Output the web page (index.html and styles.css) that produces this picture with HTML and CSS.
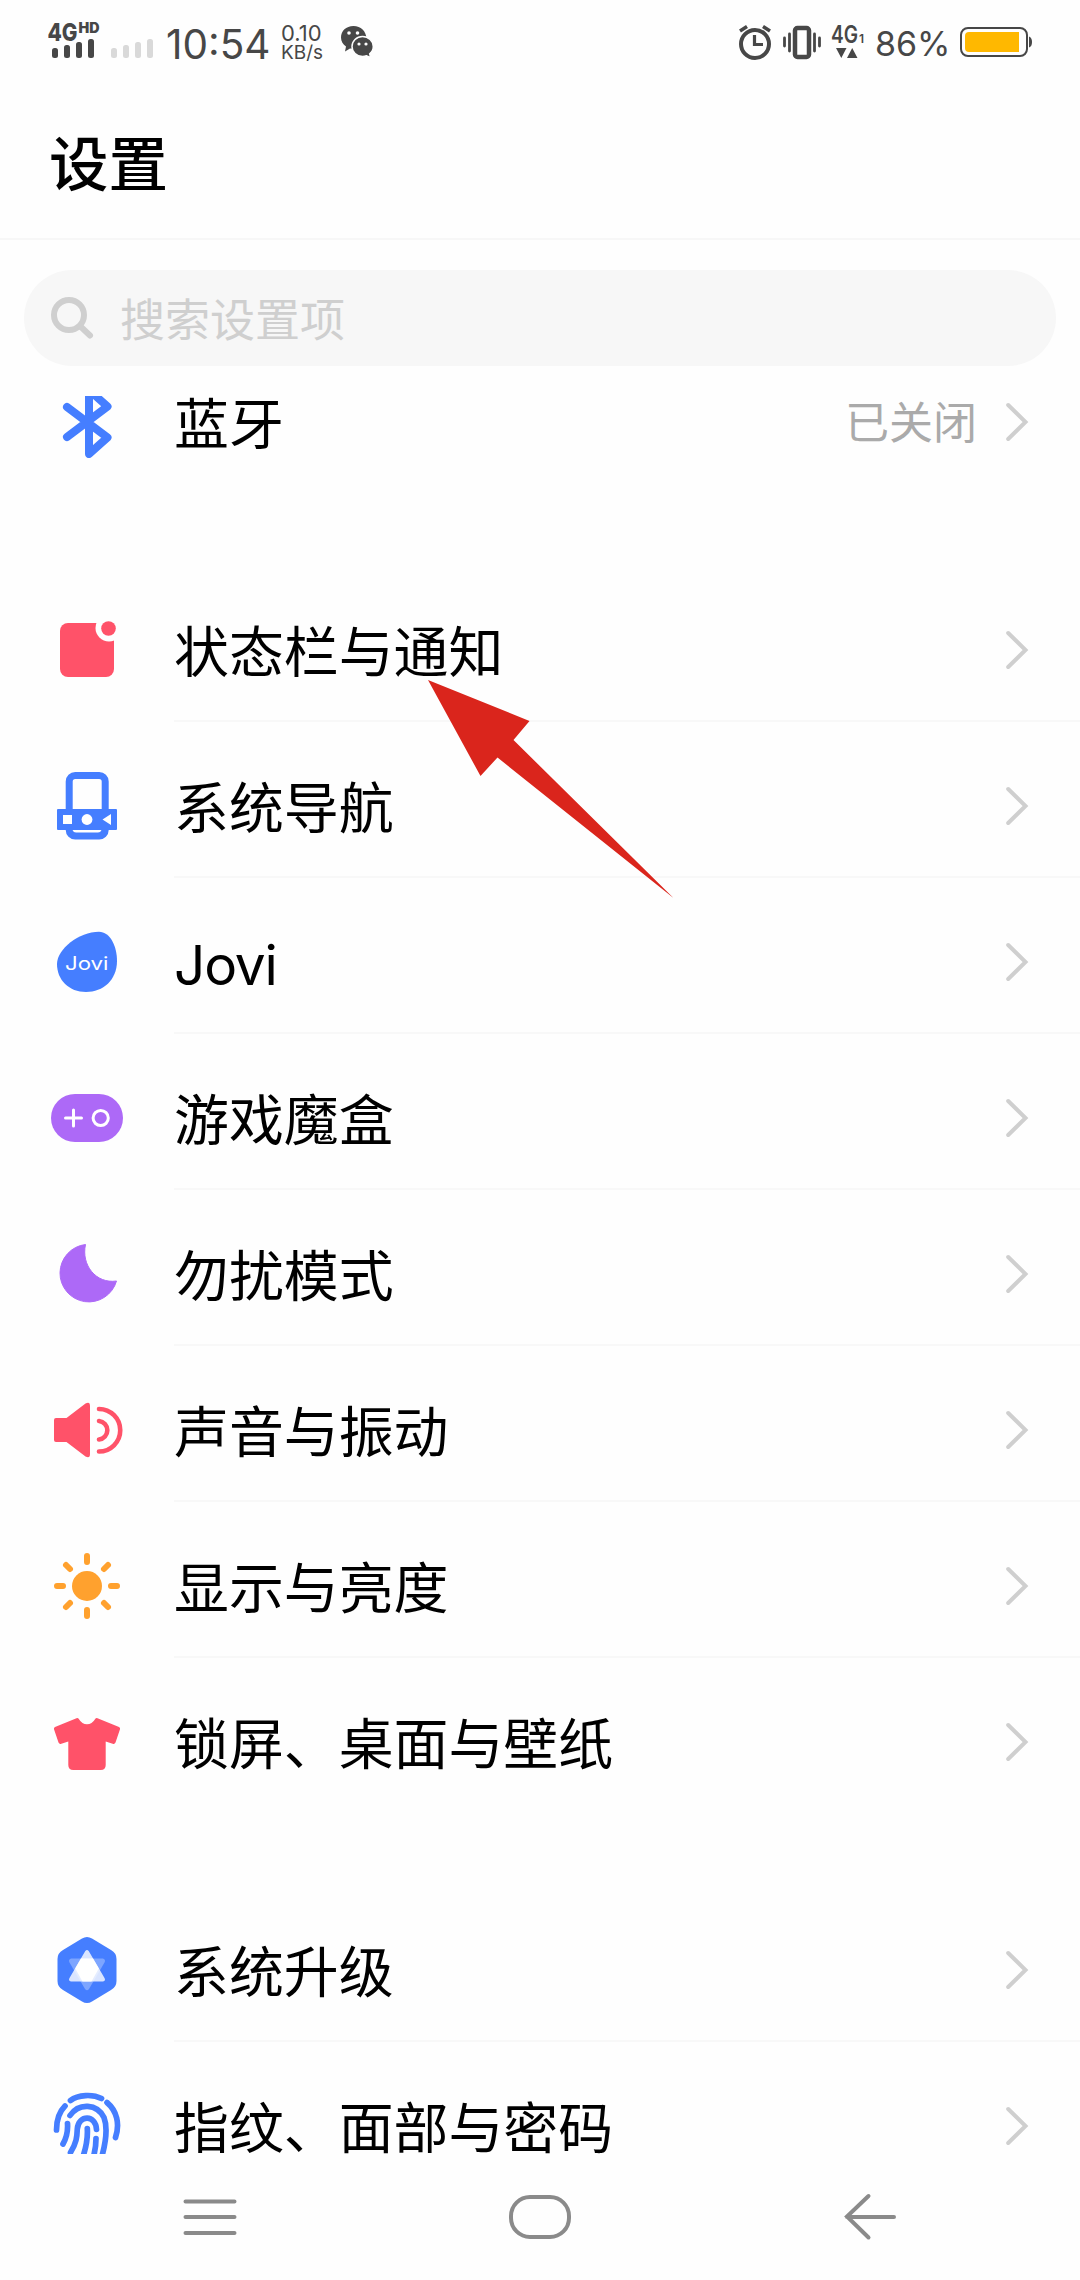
FILE: index.html
```html
<!DOCTYPE html>
<html lang="zh-CN">
<head>
<meta charset="utf-8">
<title>设置</title>
<link rel="stylesheet" href="styles.css">
</head>
<body>
<svg class="defs" width="0" height="0" aria-hidden="true">
  <symbol id="chevron" viewBox="0 0 24 40"><path d="M2.2 3 19.5 20 2.2 37" fill="none" stroke="#cfcfcf" stroke-width="4" stroke-linecap="round"/></symbol>
</svg>
<div class="screen">
  <div class="status">
    <svg class="signal" viewBox="48 0 110 80" fill="#474747">
      <text x="47.500" y="41" font-size="25" font-weight="800" textLength="30" lengthAdjust="spacingAndGlyphs">4G</text>
      <text x="78.500" y="33" font-size="14" font-weight="900" textLength="21" lengthAdjust="spacingAndGlyphs">HD</text>
      <g><rect x="52" y="48" width="6" height="10" rx="2.500"/><rect x="64" y="45" width="6" height="13" rx="2.500"/><rect x="76" y="42" width="6" height="16" rx="2.500"/><rect x="88" y="39" width="6" height="19" rx="2.500"/></g>
      <g fill="#d9d9d9"><rect x="111" y="48" width="6" height="10" rx="2.500"/><rect x="123" y="45" width="6" height="13" rx="2.500"/><rect x="135" y="42" width="6" height="16" rx="2.500"/><rect x="147" y="39" width="6" height="19" rx="2.500"/></g>
    </svg>
    <span class="time">10:54</span>
    <span class="speed"><span class="rate">0.10</span><span>KB/s</span></span>
    <svg class="wechat" viewBox="340 0 34 80">
      <path d="M353.500 26C346 26 341 31 341 37.500c0 4 2 7 5 9l-1 5 5-3c10 2 16-3 16.500-10C366 31 361 26 353.500 26z" fill="#474747"/>
      <path d="M362.500 36.500c-6 0-10.500 4.500-10.500 10s4.500 10 10.500 10c1.500 0 3-.3 4-.7l4.200 2-1-4c2.300-1.800 3.600-4.500 3.600-7.300 0-5.500-4.800-10-10.800-10z" fill="#474747" stroke="#fefefe" stroke-width="1.500"/>
      <g fill="#fefefe"><circle cx="349" cy="33" r="1.800"/><circle cx="357.500" cy="33" r="1.800"/><circle cx="359" cy="44" r="1.600"/><circle cx="366" cy="44" r="1.600"/></g>
    </svg>
    <svg class="modes" viewBox="738 0 128 80" fill="none" stroke="#474747">
      <circle cx="755" cy="44" r="14" stroke-width="4"/><path d="M754.500 35v9.500h8.500" stroke-width="3.200"/><path d="M740 31l7-4.500M763 26.500l7 4.500" stroke-width="3.500"/>
      <rect x="795" y="28" width="14" height="29" rx="2.500" stroke-width="4.500"/><path d="M789.500 34v17M784.500 38v8M814.500 34v17M819.500 38v8" stroke-width="2.800" stroke-linecap="round"/>
      <g fill="#474747" stroke="none"><text x="831" y="43" font-size="24" font-weight="600" textLength="27" lengthAdjust="spacingAndGlyphs">4G</text><text x="859" y="43" font-size="12" font-weight="600">1</text><path d="M836 48h10.500l-5.200 10zM847 58h10.500l-5.300-10z"/></g>
    </svg>
    <span class="percent">86%</span>
    <svg class="battery" viewBox="959 0 75 80"><rect x="961" y="28" width="66" height="28" rx="7" fill="none" stroke="#474747" stroke-width="2"/><path d="M969 32h50v20h-50q-4 0-4-4V36q0-4 4-4z" fill="#ffb800"/><path d="M1029 36.500q3 1 3 5.500t-3 5.500z" fill="#474747"/></svg>
  </div>
  <header class="header"><h1>设置</h1></header>
  <div class="search">
    <svg viewBox="0 0 46 46" fill="none" stroke="#cfcfcf" stroke-width="6" stroke-linecap="round"><circle cx="20" cy="20" r="15"/><path d="M31 31l10 9.500"/></svg>
    <span>搜索设置项</span>
  </div>
  <main class="viewport">
    <section class="group first">
      <div class="row">
        <svg class="icon" viewBox="0 0 72 72" fill="none" stroke="#457eff" stroke-width="8" stroke-linecap="round" stroke-linejoin="round"><path d="M16 21 56.500 51.500 38 68V4L56.500 20.500 16 51"/></svg>
        <span class="label">蓝牙</span><span class="value">已关闭</span><svg class="chev"><use href="#chevron"/></svg>
      </div>
    </section>
    <section class="group">
      <div class="row">
        <svg class="icon" viewBox="0 0 72 72" fill="#ff5269"><rect x="9" y="9" width="54" height="54" rx="8"/><circle cx="58" cy="14" r="13.500" fill="#fefefe"/><circle cx="57.500" cy="14.500" r="7.300"/></svg>
        <span class="label">状态栏与通知</span><svg class="chev"><use href="#chevron"/></svg>
      </div>
      <div class="row">
        <svg class="icon" viewBox="0 0 72 72"><rect x="18.200" y="5.500" width="36" height="60.500" rx="6" fill="none" stroke="#457eff" stroke-width="7"/><path d="M21 59h30v7H21z" fill="#457eff"/><rect x="6" y="39" width="60" height="21" rx="1" fill="#457eff"/><path d="M12 45h9v9h-9zM60 44v11l-8.500-5.500zM21.500 60h29q-1 2.500-3.500 2.500H25q-2.500 0-3.500-2.500z" fill="#fff"/><circle cx="36" cy="49.500" r="5.400" fill="#fff"/></svg>
        <span class="label">系统导航</span><svg class="chev"><use href="#chevron"/></svg>
      </div>
      <div class="row">
        <svg class="icon" viewBox="0 0 72 72"><path d="M48 5.700C59 5.700 66 20 66 35 66 54 52 66 35 66 18 66 6 54 6 38 6 23 28 5.700 48 5.700z" fill="#457eff"/><text x="14" y="43.500" font-size="18" font-weight="400" fill="#fff" textLength="43.500" lengthAdjust="spacingAndGlyphs">Jovi</text></svg>
        <span class="label latin">Jovi</span><svg class="chev"><use href="#chevron"/></svg>
      </div>
      <div class="row">
        <svg class="icon" viewBox="0 0 72 72"><rect y="12" width="72" height="48" rx="24" fill="#ad69f7"/><path d="M14.500 36h16M22.500 28v16" stroke="#fff" stroke-width="3" stroke-linecap="round"/><circle cx="49.700" cy="36" r="7.600" fill="none" stroke="#fff" stroke-width="3"/></svg>
        <span class="label">游戏魔盒</span><svg class="chev"><use href="#chevron"/></svg>
      </div>
      <div class="row">
        <svg class="icon" viewBox="0 0 72 72"><path d="M34.500 6.500A28.800 28.800 0 1 0 65.500 43C45 46 30 27 34.500 6.500z" fill="#ad69f7" stroke="#ad69f7" stroke-linejoin="round"/></svg>
        <span class="label">勿扰模式</span><svg class="chev"><use href="#chevron"/></svg>
      </div>
      <div class="row">
        <svg class="icon" viewBox="0 0 72 72"><path d="M5 24h10.500L34.500 9.500Q39 7 39 12v48q0 5-4.500 2.500L15.500 48H5q-2 0-2-2V26q0-2 2-2z" fill="#ff5269"/><path d="M48 15a21 21 0 0 1 0 42.500M48 27a9.300 9.300 0 0 1 0 18.500" fill="none" stroke="#ff5269" stroke-width="4.600" stroke-linecap="round"/></svg>
        <span class="label">声音与振动</span><svg class="chev"><use href="#chevron"/></svg>
      </div>
      <div class="row">
        <svg class="icon" viewBox="0 0 72 72"><circle cx="36" cy="36" r="15" fill="#ffa12e"/><path d="M36 12V6M36 60v6M12 36H6M60 36h6M19 19l-4-4M53 19l4-4M19 53l-4 4M53 53l4 4" stroke="#ffa12e" stroke-width="6" stroke-linecap="round"/></svg>
        <span class="label">显示与亮度</span><svg class="chev"><use href="#chevron"/></svg>
      </div>
      <div class="row">
        <svg class="icon" viewBox="0 0 72 72"><path d="M25.500 12.200q1.500-.5 2.500 1 3 5 8 5t8-5q1-1.500 2.500-1L68 21q1.500.7 1 2.300L64.500 36.500q-.8 2-2.800 1.300L54.700 35.500V59q0 5-5 5H22.300q-5 0-5-5V35.500l-7 2.300q-2 .7-2.800-1.300L3 23.300Q2.500 21.700 4 21z" fill="#ff5269"/></svg>
        <span class="label">锁屏、桌面与壁纸</span><svg class="chev"><use href="#chevron"/></svg>
      </div>
    </section>
    <section class="group">
      <div class="row">
        <svg class="icon" viewBox="0 0 72 72"><path d="M31 4.500q5-3 10 0L60 16q5.500 3 5.500 9v22q0 6-5.500 9L41 67.500q-5 3-10 0L12 56q-5.500-3-5.500-9V25q0-6 5.500-9z" fill="#457eff"/><path d="M20 24.500h32q3 1 1.500 4L38 55q-2 2.500-4 0L18.500 28.500q-1.500-3 1.500-4z" fill="#fff" opacity=".3"/><path d="M34.300 17q1.700-2 3.400 0L53.500 44q1.500 2.500-1.500 3.500H20q-3-1-1.500-3.500z" fill="#fff" opacity=".8"/><path d="M30 24.500h12L47.800 34.500 40.500 47.500h-9L24.200 34.500z" fill="#fff"/></svg>
        <span class="label">系统升级</span><svg class="chev"><use href="#chevron"/></svg>
      </div>
      <div class="row">
        <svg class="icon" viewBox="0 0 72 72" fill="none" stroke="#457eff" stroke-width="5.700" stroke-linecap="round"><path d="M19.500 10.500C27 4.500 42 4 50.500 8.500M14 16C8 22 5.500 29 5.500 40M56 12.500C66 21 69 34 64.500 47.500M19 25.500C28 12.500 46 13.500 53 27.500 57 38 54.500 53 51 66M16.500 33.500C17 41 16 47 12 54M19.500 62.500C25.500 53 26 47 26.300 39 27.500 24.500 45 24.500 45.500 39.500M36.300 38.500C37 50 35 58 31.500 68M45 48.500C45 56 44 62 42 68"/></svg>
        <span class="label">指纹、面部与密码</span><svg class="chev"><use href="#chevron"/></svg>
      </div>
    </section>
  </main>
  <nav class="nav">
    <svg viewBox="0 0 62 50"><path d="M6.500 9.500h49M6.500 25h49M6.500 41h49"/></svg>
    <svg viewBox="0 0 62 50"><rect x="2" y="5" width="58" height="40" rx="19"/></svg>
    <svg viewBox="0 0 62 50"><path d="M29.500 4 8 24.500 29.500 45.500M8 25h47"/></svg>
  </nav>
  <svg class="pointer" viewBox="0 0 246 219"><path d="M0 0 101.500 41 85.500 60 245.500 218 69.500 77.500 52.500 96z" fill="#da251c"/></svg>
</div>
</body>
</html>
```
FILE: styles.css
```css
body {
  margin: 0;
  background: #fefefe;
  color: #000;
  font-family: Inter, "Noto Sans CJK SC", sans-serif;
}

.defs {
  position: absolute;
}

.screen {
  position: relative;
  display: flex;
  flex-direction: column;
  width: 1080px;
  height: 2280px;
  overflow: hidden;
}

.status {
  display: flex;
  align-items: flex-start;
  height: 80px;
  padding: 0 46px 0 48px;
  color: #474747;
  flex: none;
}

.status svg {
  height: 80px;
  flex: none;
}

.signal { width: 110px; }

.time {
  width: 123px;
  padding: 20px 0 0 8px;
  box-sizing: border-box;
  font-size: 40.500px;
  line-height: 49px;
  white-space: nowrap;
}

.speed {
  display: flex;
  flex-direction: column;
  width: 59px;
  padding-top: 23px;
  font-size: 19px;
  line-height: 20px;
}

.rate {
  font-size: 22px;
}

.wechat { width: 34px; }

.modes {
  width: 128px;
  margin-left: auto;
}

.percent {
  width: 84px;
  padding: 23px 0 0 9px;
  box-sizing: border-box;
  font-size: 34px;
  line-height: 41px;
}

.battery {
  width: 75px;
  margin-left: 9px;
}

.header {
  display: flex;
  align-items: center;
  height: 158px;
  padding-left: 49px;
  border-bottom: 2px solid #f7f7f7;
  flex: none;
}

.header h1 {
  margin: 10px 0 0;
  font-size: 59.500px;
  font-weight: 500;
  line-height: 80px;
}

.search {
  display: flex;
  align-items: center;
  height: 96px;
  margin: 30px 24px;
  border-radius: 48px;
  background: #f7f7f7;
  color: #cfcfcf;
  font-size: 45px;
  flex: none;
}

.search svg {
  width: 46px;
  height: 46px;
  margin-left: 25px;
}

.search span {
  margin: 5px 0 0 25px;
  line-height: 60px;
}

.viewport {
  flex: 1;
  min-height: 0;
  overflow: hidden;
}

.group {
  margin-bottom: 72px;
}

.group.first {
  margin-top: -58px;
}

.row {
  position: relative;
  display: flex;
  align-items: center;
  height: 156px;
  padding: 14px 50px 2px 51px;
  box-sizing: border-box;
}

.row:not(:last-child)::after {
  content: "";
  position: absolute;
  left: 174px;
  right: 0;
  bottom: 0;
  height: 2px;
  background: #f8f8f8;
}

.icon {
  width: 72px;
  height: 72px;
}

.label {
  margin: 4px auto 0 51px;
  font-size: 54.900px;
  line-height: 66px;
}

.label.latin {
  margin-top: 6px;
  letter-spacing: -1.200px;
}

.value {
  margin: 2px 29px 0 0;
  color: #aaa;
  font-size: 44px;
  line-height: 60px;
}

.chev {
  width: 24px;
  height: 40px;
}

.nav {
  display: flex;
  align-items: center;
  justify-content: space-between;
  height: 126px;
  padding: 0 179px;
  flex: none;
}

.nav svg {
  width: 62px;
  height: 50px;
  fill: none;
  stroke: #8a8a8a;
  stroke-width: 4;
  stroke-linecap: round;
}

.pointer {
  position: absolute;
  left: 428px;
  top: 680px;
  width: 246px;
  height: 219px;
}
```
